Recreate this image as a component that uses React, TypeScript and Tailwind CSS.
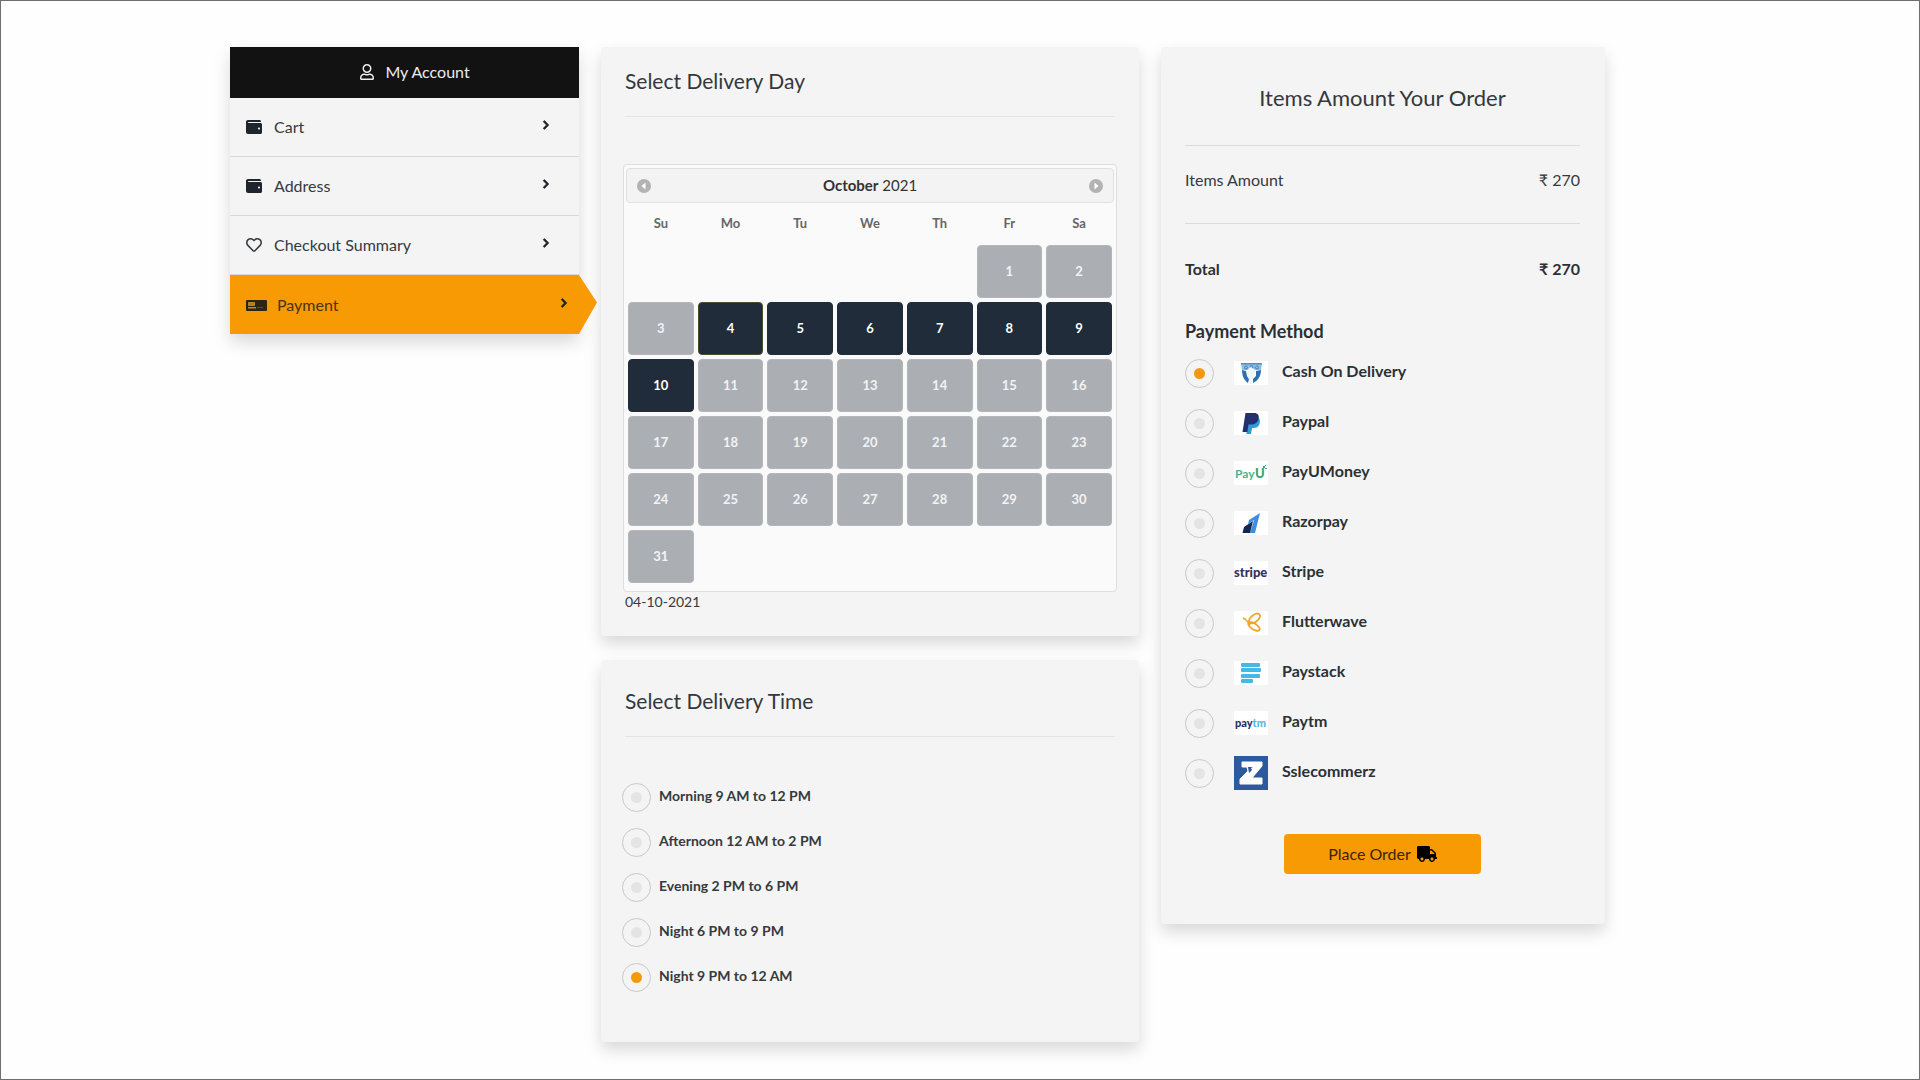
import { useState } from "react";
import type { ReactNode } from "react";
import {
  FaChevronRight,
  FaRegHeart,
  FaRegUser,
  FaTruck,
  FaWallet,
} from "react-icons/fa";

const menu = [
  { label: "Cart", icon: <FaWallet className="size-4 text-[#1f252c]" /> },
  { label: "Address", icon: <FaWallet className="size-4 text-[#1f252c]" /> },
  { label: "Checkout Summary", icon: <FaRegHeart className="size-4" /> },
];

const weekDays = ["Su", "Mo", "Tu", "We", "Th", "Fr", "Sa"];

// October 2021 starts on a Friday
const FIRST_WEEKDAY = 5;
const DAYS_IN_MONTH = 31;
const weeks = Array.from({ length: 6 }, (_, w) =>
  Array.from({ length: 7 }, (_, d) => {
    const day = w * 7 + d - FIRST_WEEKDAY + 1;
    return day >= 1 && day <= DAYS_IN_MONTH ? day : null;
  })
);

const timeSlots = [
  "Morning 9 AM to 12 PM",
  "Afternoon 12 AM to 2 PM",
  "Evening 2 PM to 6 PM",
  "Night 6 PM to 9 PM",
  "Night 9 PM to 12 AM",
];

function CardIcon() {
  return (
    <svg viewBox="0 0 21 12" className="w-[21px] h-3">
      <rect y="1" width="21" height="11" rx="1" fill="#2b2513" />
      <rect x="2" y="3" width="7" height="4" fill="#b5811f" />
      <rect x="2" y="8" width="8" height="1.500" fill="#c98a15" />
      <rect x="11" y="8" width="6" height="1" fill="#6b4a12" />
    </svg>
  );
}

function CashLogo() {
  return (
    <svg viewBox="0 0 34 24" className="w-[34px] h-6 bg-white">
      <path d="M7 2h21l-1 7H8z" fill="#8fbfe2" />
      <path d="M7 2h21v1.500H7z" fill="#4d8fc6" />
      <g fill="none" stroke="#3f7fb8">
        <circle cx="12" cy="6.500" r="1.500" />
        <circle cx="17.500" cy="6" r="1.500" />
        <circle cx="23" cy="6.500" r="1.500" />
      </g>
      <path d="M8 9l4 1 1 5 2 3-1 4c-3-2-6-6-6-13z" fill="#2f6fae" />
      <path d="M27 9l-5 1v5l-3 3v4c5-2 8-7 8-13z" fill="#2f6fae" />
      <path d="M15 7l2-1 1 1 2 1 1 2v5l-3 3v5h-3v-5l-2-4v-3z" fill="#f1f6fa" />
    </svg>
  );
}

function PaypalLogo() {
  return (
    <svg viewBox="0 0 34 24" className="w-[34px] h-6 bg-white">
      <path d="M13 6h10c3 1 3.500 4 2.500 7-1 3-3.500 4-6 4H18l-1 6h-4.500z" fill="#2f9bd8" />
      <path d="M11.500 2h8.500c4 0 5.500 2.500 4.500 6-1 4-4 5.500-7.500 5.500h-2.500L13.300 21H8.500z" fill="#22306f" />
    </svg>
  );
}

function PayuLogo() {
  return (
    <svg viewBox="0 0 34 24" className="w-[34px] h-6 bg-white">
      <text x="1" y="17" fontSize="12" fill="#4bb28c">
        Pay
      </text>
      <text x="21" y="17" fontSize="13" fontWeight="900" fill="#35a57c">
        U
      </text>
      <path d="M29 5h2v2h-2zM31 4h1v1h-1zM31 7h2v1h-2z" fill="#35a57c" />
    </svg>
  );
}

function RazorpayLogo() {
  return (
    <svg viewBox="0 0 34 24" className="w-[34px] h-6 bg-white">
      <path d="M26 2L15 9l-1 4 6-4-4 13h5z" fill="#3f8fe0" />
      <path d="M10 16l9-6-3 12H8.500z" fill="#13264f" />
    </svg>
  );
}

function StripeLogo() {
  return (
    <svg viewBox="0 0 34 24" className="w-[34px] h-6 bg-white">
      <text x="0" y="16" fontSize="13" fontWeight="900" fill="#352f5f">
        stripe
      </text>
    </svg>
  );
}

function FlutterwaveLogo() {
  return (
    <svg viewBox="0 0 34 24" className="w-[34px] h-6 bg-white">
      <g fill="none" stroke="#eda62f" strokeWidth="1.800">
        <ellipse cx="20.500" cy="7.500" rx="6.500" ry="3.500" transform="rotate(-38 20.500 7.500)" />
        <ellipse cx="20" cy="15.500" rx="6.500" ry="3" transform="rotate(32 20 15.500)" />
        <path d="M9 7c3 1 5 4 7 7" />
      </g>
    </svg>
  );
}

function PaystackLogo() {
  return (
    <svg viewBox="0 0 34 24" className="w-[34px] h-6 bg-white">
      <g fill="#45b9e3">
        <rect x="7" y="2" width="19" height="4" rx="1" />
        <rect x="7" y="7" width="20" height="4" rx="1" />
        <rect x="7" y="13" width="19" height="4" rx="1" />
        <rect x="7" y="18" width="12" height="4" rx="1" />
      </g>
    </svg>
  );
}

function PaytmLogo() {
  return (
    <svg viewBox="0 0 34 24" className="w-[34px] h-6 bg-white">
      <text x="1" y="16" fontSize="11" fontWeight="900" fill="#262f66">
        pay
        <tspan fill="#56b9e6">tm</tspan>
      </text>
    </svg>
  );
}

function SslLogo() {
  return (
    <svg viewBox="0 0 34 34" className="size-[34px]">
      <rect width="34" height="34" fill="#2b5a9f" />
      <path
        d="M8 6h20v4L18 22h10v6H6v-5l8-8-1-4H8z"
        fill="#fff"
        stroke="#fff"
        strokeLinejoin="round"
      />
      <path d="M14 11h5l-2 1 1 2-3 3z" fill="#2b5a9f" />
    </svg>
  );
}

const methods: { label: string; logo: ReactNode }[] = [
  { label: "Cash On Delivery", logo: <CashLogo /> },
  { label: "Paypal", logo: <PaypalLogo /> },
  { label: "PayUMoney", logo: <PayuLogo /> },
  { label: "Razorpay", logo: <RazorpayLogo /> },
  { label: "Stripe", logo: <StripeLogo /> },
  { label: "Flutterwave", logo: <FlutterwaveLogo /> },
  { label: "Paystack", logo: <PaystackLogo /> },
  { label: "Paytm", logo: <PaytmLogo /> },
  { label: "Sslecommerz", logo: <SslLogo /> },
];

const radioClass =
  "appearance-none shrink-0 size-[29px] rounded-full border border-[#c8c8c8] grid place-content-center before:size-[11px] before:rounded-full before:bg-[#e4e4e4] checked:before:bg-[#f39a0b]";

const cardClass = "bg-[#f4f4f4] rounded-[4px] shadow-[0_8px_16px_rgba(0,0,0,0.15)]";

function Chevron() {
  return (
    <FaChevronRight
      className="size-[10px] mb-1 overflow-visible text-[#1b1e22]"
      stroke="currentColor"
      strokeWidth={40}
    />
  );
}

function Sidebar() {
  return (
    <nav className="bg-[#f4f4f4] shadow-[0_8px_16px_rgba(0,0,0,0.15)]">
      <div className="h-[51px] bg-[#121212] text-[#ececec] flex items-center justify-center gap-[10px] pl-5 pb-0.5">
        <FaRegUser className="size-4" />
        My Account
      </div>
      {menu.map((item) => (
        <a
          key={item.label}
          href="#"
          className="h-[59px] border-b border-[#d8d8d8] flex items-center pl-4 pr-7"
        >
          {item.icon}
          <span className="ml-3 flex-1">{item.label}</span>
          <Chevron />
        </a>
      ))}
      <a
        href="#"
        aria-current="page"
        className="relative h-[59px] bg-[#f79a03] text-[#4a3510] flex items-center pl-4 pr-[10px]"
      >
        <CardIcon />
        <span className="ml-[10px] flex-1">Payment</span>
        <Chevron />
        <svg
          viewBox="0 0 18 58"
          preserveAspectRatio="none"
          className="absolute left-full top-0 w-[18px] h-full"
        >
          <path d="M0 0L18 27L0 58z" fill="#f79a03" />
        </svg>
      </a>
    </nav>
  );
}

function MonthArrow({ dir }: { dir: "prev" | "next" }) {
  return (
    <button
      type="button"
      aria-label={dir === "prev" ? "Previous month" : "Next month"}
      className="size-[14px]"
    >
      <svg viewBox="0 0 14 14" className="size-[14px]">
        <circle cx="7" cy="7" r="7" fill="#b3b3b3" />
        <path
          d={dir === "prev" ? "M8.500 3.500v7L4.500 7z" : "M5.500 3.500v7L9.500 7z"}
          fill="#fff"
        />
      </svg>
    </button>
  );
}

function Calendar() {
  const [selected, setSelected] = useState(4);

  return (
    <div className="-mx-[2px] bg-[#fafafa] border border-[#dcdee0] rounded-[4px] pt-[3px] pb-1">
      <div className="mx-[2px] h-[35px] bg-[#f3f3f3] border border-[#e0e0e0] rounded-[4px] flex items-center justify-between px-[10px]">
        <MonthArrow dir="prev" />
        <p className="text-[15px] text-[#333]">
          <span className="font-bold">October</span> 2021
        </p>
        <MonthArrow dir="next" />
      </div>
      <table className="w-full table-fixed border-separate border-spacing-1 text-[13px] font-bold">
        <thead>
          <tr>
            {weekDays.map((d) => (
              <th key={d} className="h-[34px] p-0 text-[#666]">
                {d}
              </th>
            ))}
          </tr>
        </thead>
        <tbody>
          {weeks.map((week, w) => (
            <tr key={w}>
              {week.map((day, d) => (
                <td key={d} className="p-0">
                  {day && (
                    <button
                      type="button"
                      disabled={day < 4 || day > 10}
                      onClick={() => setSelected(day)}
                      className={`block w-full h-[53px] rounded-[4px] border text-white ${
                        day === selected
                          ? "bg-[#212c3b] border-[#4c4a33]"
                          : "bg-[#212c3b] border-[#212c3b] disabled:bg-[#abafb4] disabled:border-[#b3b6ba] disabled:text-[#f2f3f4]"
                      }`}
                    >
                      {day}
                    </button>
                  )}
                </td>
              ))}
            </tr>
          ))}
        </tbody>
      </table>
    </div>
  );
}

export default function App() {
  return (
    <main className="min-h-screen bg-[#fefefe] border border-[#6e6e6e] pl-[229px] pr-[314px] pt-[46px] pb-9 grid grid-cols-[349fr_538fr_444fr] gap-[22px] items-start font-[Lato,sans-serif] text-base text-[#343a40]">
      <Sidebar />

      <div className="flex flex-col gap-6">
        <section className={`${cardClass} px-6 pb-6`}>
          <h2 className="h-[70px] pt-5 text-[21px] leading-7 text-[#33383d] border-b border-[#e4e4e4]">
            Select Delivery Day
          </h2>
          <div className="pt-[47px]">
            <Calendar />
          </div>
          <p className="text-sm leading-5">04-10-2021</p>
        </section>

        <section className={`${cardClass} px-6 pb-[42px]`}>
          <h2 className="h-[77px] pt-[27px] text-[21px] leading-7 text-[#33383d] border-b border-[#e4e4e4]">
            Select Delivery Time
          </h2>
          <div className="-ml-[3px] pt-[38px]">
            {timeSlots.map((slot, i) => (
              <label key={slot} className="h-[45px] flex items-center gap-2 font-bold text-sm">
                <input
                  type="radio"
                  name="slot"
                  defaultChecked={i === 4}
                  className={radioClass}
                />
                <span className="pb-1">{slot}</span>
              </label>
            ))}
          </div>
        </section>
      </div>

      <section className={`${cardClass} pl-6 pr-[25px] pb-[50px]`}>
        <h2 className="h-[99px] flex items-center justify-center pt-0.5 text-[22px] text-[#33383d] border-b border-[#dcdcdc]">
          Items Amount Your Order
        </h2>
        <div className="h-[78px] flex justify-between pt-[22px] border-b border-[#dcdcdc]">
          <span>Items Amount</span>
          <span>₹ 270</span>
        </div>
        <div className="flex justify-between pt-[33px] font-bold text-[#2b3035]">
          <span>Total</span>
          <span>₹ 270</span>
        </div>
        <h3 className="pt-9 text-lg leading-7 font-bold text-[#2b3035]">Payment Method</h3>
        <div className="mt-[3px]">
          {methods.map((m, i) => (
            <label key={m.label} className="h-[50px] flex items-center font-bold text-[#2b3035]">
              <input
                type="radio"
                name="method"
                defaultChecked={i === 0}
                className={radioClass}
              />
              <span className="ml-5 mr-[14px]">{m.logo}</span>
              <span className="pb-1">{m.label}</span>
            </label>
          ))}
        </div>
        <button
          type="button"
          className="mx-auto mt-9 w-[197px] h-10 rounded-[4px] bg-[#f79a03] text-[#3b2405] flex items-center justify-center gap-[6px]"
        >
          Place Order
          <FaTruck className="size-5 text-black" />
        </button>
      </section>
    </main>
  );
}
